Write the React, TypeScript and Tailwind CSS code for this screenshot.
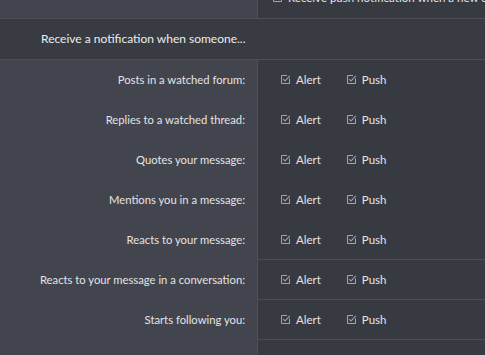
import React from "react";

const CheckIcon = () => (
  <svg width="11" height="11" viewBox="0 0 11 11" fill="none" className="shrink-0">
    <path d="M9.5 4.5V9.5H1.5V1.5H7" stroke="#a3a5aa" strokeWidth="1" />
    <path d="M3.2 5.2L5 7L9.8 1.8" stroke="#a3a5aa" strokeWidth="1.1" />
  </svg>
);

const rows = [
  { label: "Posts in a watched forum:", line: false },
  { label: "Replies to a watched thread:", line: false },
  { label: "Quotes your message:", line: false },
  { label: "Mentions you in a message:", line: false },
  { label: "Reacts to your message:", line: true },
  { label: "Reacts to your message in a conversation:", line: true },
  { label: "Starts following you:", line: true },
];

const Option = ({ text }: { text: string }) => (
  <label className="flex items-center gap-[5px] text-[11.5px] text-[#e4e4e6]">
    <CheckIcon />
    {text}
  </label>
);

export default function App() {
  return (
    <div
      className="h-[355px] w-[485px] overflow-hidden bg-[#383a42]"
      style={{ fontFamily: 'Lato, "Noto Sans", sans-serif' }}
    >
      <div className="flex h-[19px] border-b border-[#4b4e56]">
        <div className="w-[258px] border-r border-[#4b4e56] bg-[#42454d]" />
        <div className="flex-1 overflow-hidden pl-[14px]">
          <div className="-mt-[11px] flex items-center gap-[5px] whitespace-nowrap text-[11.5px] text-[#e4e4e6]">
            <CheckIcon />
            Receive push notification when a new conversation message is received
          </div>
        </div>
      </div>

      <div className="flex h-[41px] items-center border-b border-[#4b4e56] bg-[#393b43] pl-[41px] text-[12px] text-[#ececee]">
        Receive a notification when someone...
      </div>

      {rows.map((r) => (
        <div key={r.label} className="flex h-[40px]">
          <div className="flex w-[258px] items-center justify-end border-r border-[#4b4e56] bg-[#42454d] pr-[12px] text-[11.25px] text-[#e4e4e6]">
            {r.label}
          </div>
          <div
            className={
              "flex flex-1 items-center gap-[25px] pl-[22px] " +
              (r.line ? "border-b border-[#4b4e56]" : "border-b border-transparent")
            }
          >
            <Option text="Alert" />
            <Option text="Push" />
          </div>
        </div>
      ))}
      <div className="flex h-[40px]">
        <div className="w-[258px] border-r border-[#4b4e56] bg-[#42454d]" />
        <div className="flex-1" />
      </div>
    </div>
  );
}
